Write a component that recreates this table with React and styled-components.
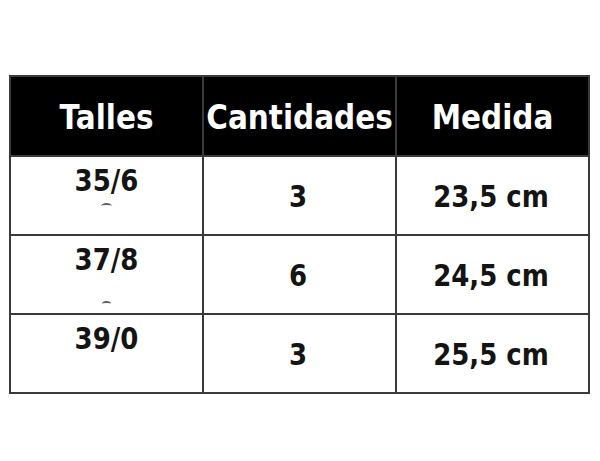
import React from "react";
import styled, { createGlobalStyle } from "styled-components";

const Global = createGlobalStyle`
  html, body { margin: 0; padding: 0; background: #ffffff; }
  body { font-family: "DejaVu Sans", Verdana, sans-serif; }
`;

const Page = styled.div`
  width: 600px;
  height: 461px;
  padding: 75px 0 0 9px;
  box-sizing: border-box;
  background: #fff;
`;

const Table = styled.div`
  display: inline-grid;
  grid-template-columns: 191px 191px 191px;
  grid-template-rows: 78px 77px 77px 77px;
  gap: 2px;
  padding: 2px;
  background: #3a3a3a;
`;

const HeadCell = styled.div`
  background: #000;
  color: #fff;
  font-weight: bold;
  font-size: 29.5px;
  display: flex;
  align-items: center;
  justify-content: center;
  white-space: nowrap;
  padding-top: 4px;
`;

const Cell = styled.div`
  background: #fff;
  color: #141414;
  font-weight: bold;
  font-size: 26px;
  display: flex;
  flex-direction: column;
  align-items: center;
  justify-content: ${(p) => (p.$top ? "flex-start" : "center")};
  padding-top: ${(p) => (p.$top ? "9px" : "3px")};
  padding-right: ${(p) => (p.$top ? "0" : "3px")};
  box-sizing: border-box;
`;

const Text = styled.span`
  display: inline-block;
  transform: scaleY(1.13);
  white-space: nowrap;
`;

const Mark = styled.span`
  display: block;
  width: ${(p) => p.$w}px;
  height: 4px;
  margin-top: ${(p) => p.$gap}px;
  border-top: 2px solid #444;
  border-radius: 50% 50% 0 0;
  opacity: 0.85;
`;

const rows = [
  { talle: "35/6", cant: "3", medida: "23,5 cm", mark: { w: 11, gap: 7 } },
  { talle: "37/8", cant: "6", medida: "24,5 cm", mark: { w: 9, gap: 26 } },
  { talle: "39/0", cant: "3", medida: "25,5 cm", mark: null },
];

export default function App() {
  return (
    <>
      <Global />
      <Page>
        <Table>
          <HeadCell><Text>Talles</Text></HeadCell>
          <HeadCell><Text>Cantidades</Text></HeadCell>
          <HeadCell><Text>Medida</Text></HeadCell>
          {rows.map((r) => (
            <React.Fragment key={r.talle}>
              <Cell $top>
                <Text>{r.talle}</Text>
                {r.mark && <Mark $w={r.mark.w} $gap={r.mark.gap} />}
              </Cell>
              <Cell><Text>{r.cant}</Text></Cell>
              <Cell><Text>{r.medida}</Text></Cell>
            </React.Fragment>
          ))}
        </Table>
      </Page>
    </>
  );
}
